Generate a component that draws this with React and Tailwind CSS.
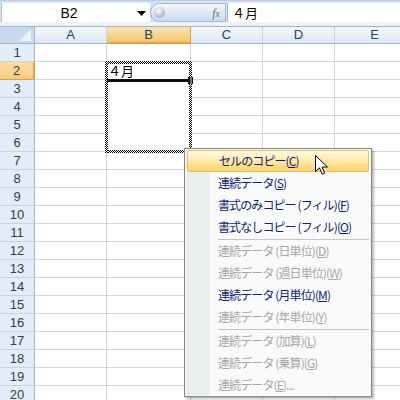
import React from "react";

const cols = [
  { k: "A", w: "w-[72px]" },
  { k: "B", w: "w-[84px]" },
  { k: "C", w: "w-[72px]" },
  { k: "D", w: "w-[72px]" },
  { k: "E", w: "w-[80px]" },
];

const rows = Array.from({ length: 20 }, (_, i) => i + 1);

const items = [
  { t: "セルのコピー", k: "C", on: true, hi: true },
  { t: "連続データ", k: "S", on: true },
  { t: "書式のみコピー (フィル)", k: "F", on: true },
  { t: "書式なしコピー (フィル)", k: "O", on: true },
  { sep: true },
  { t: "連続データ (日単位)", k: "D" },
  { t: "連続データ (週日単位)", k: "W" },
  { t: "連続データ (月単位)", k: "M", on: true },
  { t: "連続データ (年単位)", k: "Y" },
  { sep: true },
  { t: "連続データ (加算)", k: "L" },
  { t: "連続データ (乗算)", k: "G" },
  { t: "連続データ", k: "E", tail: "..." },
];

function Cell({ col, r }) {
  const inSel = col.k === "B" && r >= 2 && r <= 5;
  return (
    <div
      className={`${col.w} shrink-0 h-full border-r border-b ${
        inSel ? "border-b-white border-r-[#d0d7e5]" : "border-[#d0d7e5]"
      } relative`}
    >
      {col.k === "B" && r === 2 && (
        <span className="absolute left-[1px] top-[1px] text-[13px] leading-[16px] text-black font-['Noto_Sans_CJK_JP',sans-serif]">
          ４月
        </span>
      )}
    </div>
  );
}

export default function App() {
  return (
    <div className="relative w-[400px] h-[400px] overflow-hidden bg-white font-['Liberation_Sans',sans-serif]">
      {/* top strip */}
      <div className="h-[3px] bg-[#d6e2f1] border-t border-[#b9cde6]" />
      {/* formula bar */}
      <div className="h-[19px] flex bg-[#d6e2f1]">
        <div className="ml-[1px] w-[149px] bg-white border-l border-[#a9bfd9] flex items-center relative">
          <span className="w-[134px] text-center text-[14px] leading-none text-black">B2</span>
          <svg width="9" height="6" viewBox="0 0 9 6" className="absolute left-[135px] top-[8px]">
            <polygon points="0,0 9,0 4.5,5" fill="#000" />
          </svg>
        </div>
        <div className="w-[76px] rounded-l-full border border-[#9eb6ce] bg-gradient-to-b from-[#f4f8fd] to-[#cbdaee] flex items-center justify-between pl-[3px] pr-[5px]">
          <div className="w-[11px] h-[11px] rounded-full bg-[radial-gradient(circle_at_40%_35%,#ffffff_0%,#c9d0da_45%,#8e9aab_100%)]" />
          <span className="text-[12px] italic font-['Liberation_Serif',serif] text-[#6a7585] leading-none">
            f<span className="text-[10px]">x</span>
          </span>
        </div>
        <div className="ml-[1px] flex-1 bg-white border-l border-[#9eb6ce] flex items-center pl-[4px]">
          <span className="text-[13px] leading-none text-black font-['Noto_Sans_CJK_JP',sans-serif]">４月</span>
        </div>
      </div>
      <div className="h-[5px] bg-[#eef3fa] border-b border-[#9eb6ce]" />

      {/* header row */}
      <div className="flex h-[17px]">
        <div className="w-[35px] shrink-0 h-full bg-[#c8d8ed] border-r border-b border-[#9eb6ce] relative">
          <svg width="12" height="12" viewBox="0 0 12 12" className="absolute right-[3px] bottom-[2px]">
            <polygon points="12,0 12,12 0,12" fill="#eef3fa" />
          </svg>
        </div>
        {cols.map((c) =>
          c.k === "B" ? (
            <div
              key={c.k}
              className={`${c.w} shrink-0 h-full bg-gradient-to-b from-[#fae3b4] to-[#f3c66c] border-r border-b-2 border-[#f29b3c] flex items-center justify-center text-[13px] text-[#26435a]`}
            >
              {c.k}
            </div>
          ) : (
            <div
              key={c.k}
              className={`${c.w} shrink-0 h-full bg-gradient-to-b from-[#f5f8fc] to-[#dde7f4] border-r border-b border-r-[#c3d2e4] border-b-[#9eb6ce] flex items-center justify-center text-[13px] text-[#26435a]`}
            >
              {c.k}
            </div>
          )
        )}
      </div>

      {/* rows */}
      {rows.map((r) => (
        <div key={r} className="flex h-[18px]">
          {r === 2 ? (
            <div className="w-[35px] shrink-0 h-full bg-gradient-to-b from-[#fbdca0] to-[#f8cf81] border-r-2 border-b border-[#f29b3c] flex items-center justify-center text-[13px] text-[#26435a]">
              {r}
            </div>
          ) : (
            <div className="w-[35px] shrink-0 h-full bg-[#e4ecf7] border-r border-b border-r-[#9eb6ce] border-b-[#c5d5e8] flex items-center justify-center text-[13px] text-[#26435a]">
              {r}
            </div>
          )}
          {cols.map((c) => (
            <Cell key={c.k} col={c} r={r} />
          ))}
        </div>
      ))}

      {/* marching ants selection */}
      <div className="absolute left-[105px] top-[61px] w-[87px] h-[3px] bg-[repeating-conic-gradient(#000_0_25%,#fff_0_50%)] bg-[length:2px_2px]" />
      <div className="absolute left-[105px] top-[150px] w-[87px] h-[3px] bg-[repeating-conic-gradient(#000_0_25%,#fff_0_50%)] bg-[length:2px_2px]" />
      <div className="absolute left-[105px] top-[61px] w-[3px] h-[92px] bg-[repeating-conic-gradient(#000_0_25%,#fff_0_50%)] bg-[length:2px_2px]" />
      <div className="absolute left-[189px] top-[61px] w-[3px] h-[92px] bg-[repeating-conic-gradient(#000_0_25%,#fff_0_50%)] bg-[length:2px_2px]" />

      {/* black fill bar */}
      <div className="absolute left-[107px] top-[79px] w-[82px] h-[3px] bg-[#111]" />
      <div className="absolute left-[188px] top-[77px] w-[5px] h-[7px] border-l-2 border-r border-[#111] bg-[#777]" />

      {/* context menu */}
      <div className="absolute left-[184px] top-[148px] w-[188px] h-[249px] border border-[#868686] bg-[#fafafa] shadow-[2px_2px_2px_rgba(0,0,0,0.28)] p-[1px] font-['Noto_Sans_CJK_JP',sans-serif]">
        <div className="absolute left-[1px] top-[1px] bottom-[1px] w-[25px] bg-[#e9eeee] border-r border-white" />
        <div className="relative flex flex-col">
          {items.map((it, i) =>
            it.sep ? (
              <div key={i} className="h-[2px] flex items-center pl-[32px] pr-[1px]">
                <div className="flex-1 h-px bg-[#c5c5c5]" />
              </div>
            ) : (
              <div
                key={i}
                className={`h-[22px] flex items-center text-[12px] tracking-[-0.9px] leading-none ${
                  it.hi
                    ? "mx-[1px] pl-[31px] border border-[#e2bf64] rounded-[2px] bg-gradient-to-b from-[#fffbe6] via-[#ffe9a8] to-[#ffd262]"
                    : "pl-[32px]"
                } ${it.on ? "text-[#0c1f6e]" : "text-[#a7a7a7]"}`}
              >
                <span>
                  {it.t}(<span className="underline">{it.k}</span>){it.tail || ""}
                </span>
              </div>
            )
          )}
        </div>
      </div>

      {/* mouse cursor */}
      <svg width="14" height="22" viewBox="0 0 14 22" className="absolute left-[315px] top-[155px]">
        <path
          d="M0.5 0.5 L0.5 16.5 L4.5 12.8 L7.2 19.2 L9.6 18.2 L7 12 L12.5 12 Z"
          fill="#fff"
          stroke="#000"
          strokeWidth="1"
          strokeLinejoin="miter"
        />
      </svg>
    </div>
  );
}
